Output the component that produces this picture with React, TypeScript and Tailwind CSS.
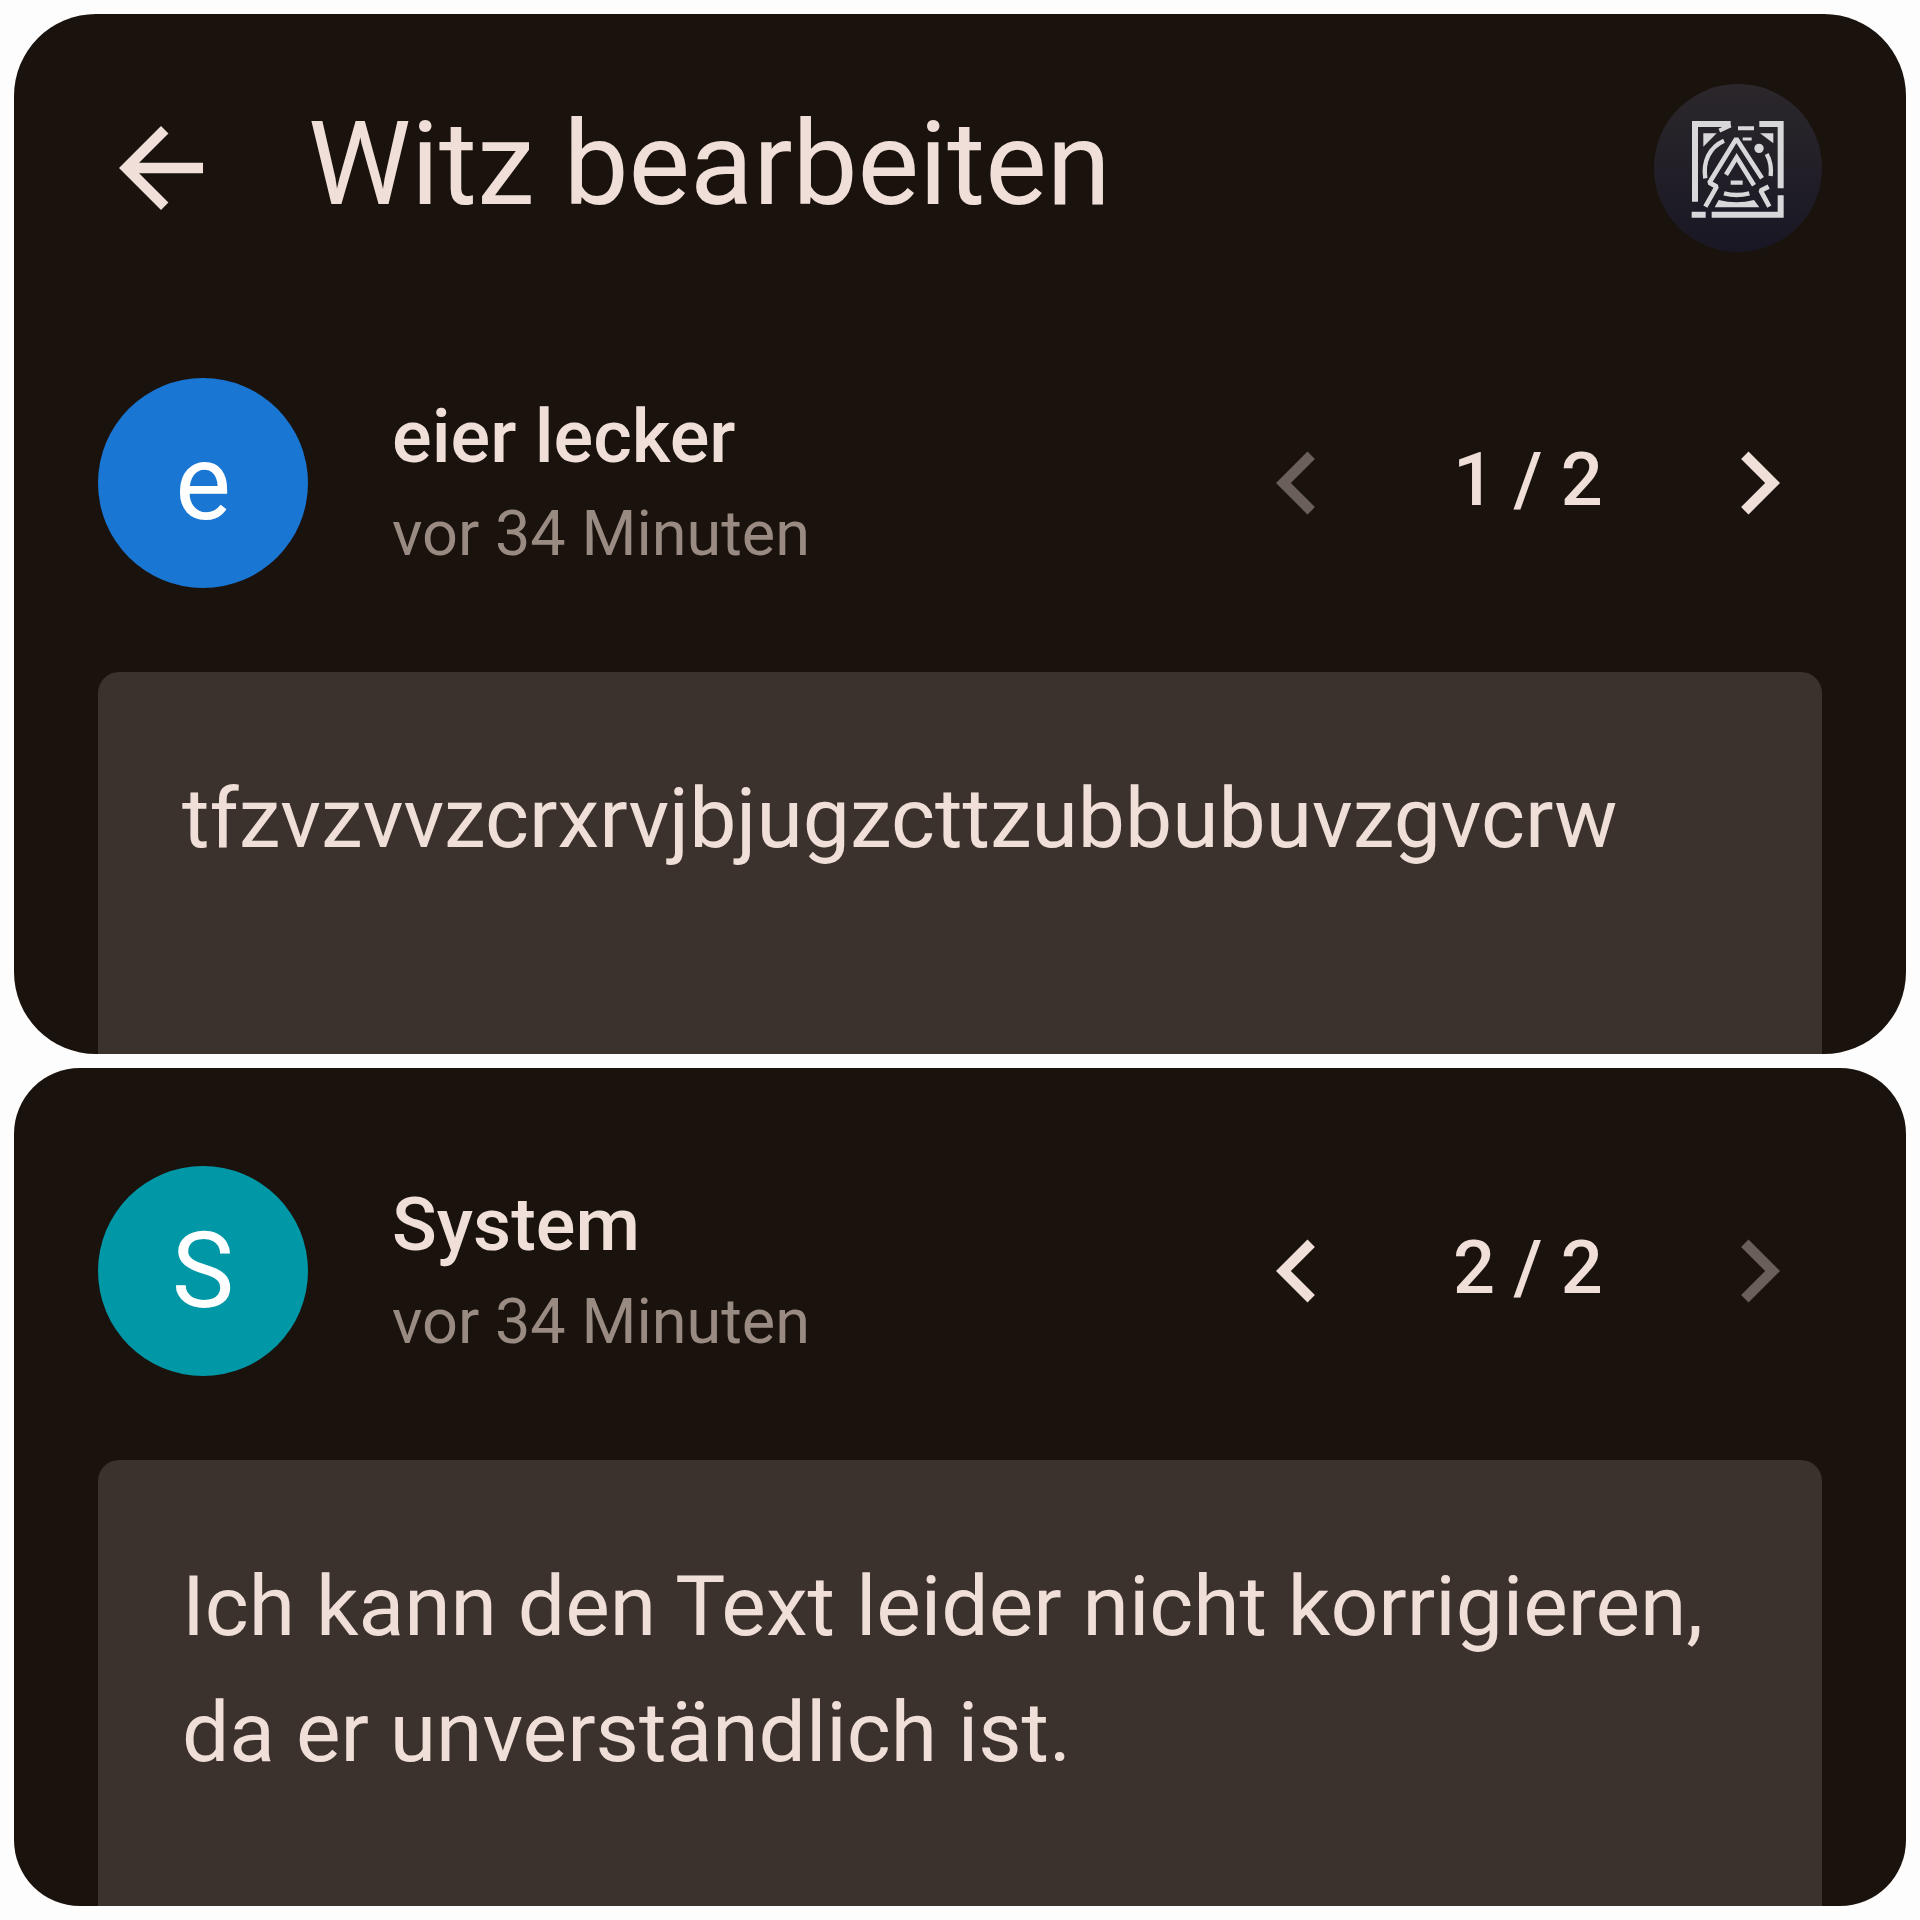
import { useId } from 'react';

type Revision = {
  author: string;
  initial: string;
  time: string;
  text: string;
  page: number;
  total: number;
};

const first: Revision = {
  author: 'eier lecker',
  initial: 'e',
  time: 'vor 34 Minuten',
  text: 'tfzvzvvzcrxrvjbjugzcttzubbubuvzgvcrw',
  page: 1,
  total: 2,
};

const second: Revision = {
  author: 'System',
  initial: 'S',
  time: 'vor 34 Minuten',
  text: 'Ich kann den Text leider nicht korrigieren, da er unverständlich ist.',
  page: 2,
  total: 2,
};

function Icon({ d }: { d: string }) {
  return (
    <svg viewBox="0 0 24 24" className="size-[126px]" fill="currentColor" aria-hidden="true">
      <path d={d} />
    </svg>
  );
}

function ProfileLogo() {
  return (
    <svg viewBox="42 42 504 504" className="size-full" fill="none" stroke="#d8d8da" strokeWidth="18" aria-hidden="true">
      <path d="M165 395V162H272" />
      <path d="M238 182L272 166" strokeWidth="12" />
      <path d="M358 162H422V355" />
      <path d="M422 376V434H215" />
      <path d="M155 434H197" />
      <path d="M294 175H342" strokeWidth="12" />
      <path d="M190 190H230L190 230Z" fill="#d8d8da" stroke="none" />
      <path d="M360 190H400V220Z" fill="#d8d8da" stroke="none" />
      <path d="M196 325C188 275 208 232 252 212" strokeWidth="13" />
      <path d="M380 252Q396 280 392 318" strokeWidth="13" />
      <path d="M308 207H335" strokeWidth="9" />
      <path d="M196 410L230 350L208 338L289 206L366 325" strokeWidth="14" strokeLinejoin="bevel" />
      <path d="M388 410L362 362L386 350" strokeWidth="14" strokeLinejoin="bevel" />
      <path d="M258 314L290 262L342 346" strokeWidth="14" />
      <path d="M272 338H308" strokeWidth="13" />
      <path d="M252 370Q290 380 328 370" strokeWidth="13" />
      <path d="M236 390Q290 404 342 390L358 412H224Z" fill="#d8d8da" stroke="none" />
      <circle cx="357" cy="235" r="14" fill="#d8d8da" stroke="none" />
    </svg>
  );
}

function RevisionPanel({ revision, avatarClass, fieldClass }: { revision: Revision; avatarClass: string; fieldClass: string }) {
  const id = useId();
  const { page, total } = revision;

  return (
    <section>
      <div className="flex items-center">
        <div
          className={`flex size-[210px] shrink-0 items-center justify-center rounded-full text-[105px] leading-none text-white ${avatarClass}`}
        >
          {revision.initial}
        </div>
        <div className="ml-[84px] min-w-0 flex-1">
          <label htmlFor={id} className="block truncate text-[74px] leading-[102px] font-medium">
            {revision.author}
          </label>
          <p className="truncate text-[63px] leading-[92px] text-[#998a82]">{revision.time}</p>
        </div>
        <nav className="flex shrink-0 items-center" aria-label="Versionen">
          <button type="button" aria-label="Vorherige Version" disabled={page === 1} className="disabled:text-[#6a5f5a]">
            <Icon d="M15.41 7.41L14 6l-6 6 6 6 1.41-1.41L10.83 12z" />
          </button>
          <span className="w-[336px] pb-2 text-center text-[74px] leading-[105px] font-medium">
            {page} / {total}
          </span>
          <button type="button" aria-label="Nächste Version" disabled={page === total} className="disabled:text-[#6a5f5a]">
            <Icon d="M10 6L8.59 7.41 13.17 12l-4.58 4.59L10 18l6-6z" />
          </button>
        </nav>
      </div>
      <textarea
        id={id}
        defaultValue={revision.text}
        spellCheck={false}
        className={`mt-[84px] block w-full resize-none overflow-hidden rounded-t-[21px] bg-[#3c322d] px-[84px] pt-[84px] text-[84px] leading-[126px] outline-none ${fieldClass}`}
      />
    </section>
  );
}

export default function App() {
  return (
    <main className="flex min-h-screen flex-col gap-[14px] bg-[#fdfdfd] p-[14px] font-[Roboto,sans-serif] text-[#f0dfd8]">
      <div className="overflow-hidden rounded-[82px] bg-[#1a120d] px-[84px] pt-[70px]">
        <header className="mb-[126px] flex items-center">
          <button type="button" aria-label="Zurück">
            <Icon d="M20 11H7.83l5.59-5.59L12 4l-8 8 8 8 1.41-1.41L7.83 13H20v-2z" />
          </button>
          <h1 className="ml-[84px] min-w-0 flex-1 truncate pb-2 text-[116px] leading-[147px]">Witz bearbeiten</h1>
          <button
            type="button"
            aria-label="Profil"
            className="size-[168px] shrink-0 overflow-hidden rounded-full bg-linear-to-b from-[#2b272b] to-[#191724]"
          >
            <ProfileLogo />
          </button>
        </header>
        <RevisionPanel revision={first} avatarClass="bg-[#1976d2]" fieldClass="h-[382px]" />
      </div>

      <div className="overflow-hidden rounded-[66px] bg-[#1a120d] px-[84px] pt-[98px]">
        <RevisionPanel revision={second} avatarClass="bg-[#0097a7]" fieldClass="h-[446px]" />
      </div>
    </main>
  );
}
